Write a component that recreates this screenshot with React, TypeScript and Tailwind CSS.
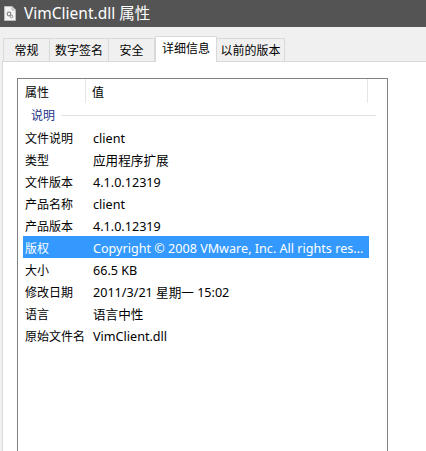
import * as React from "react";

const rows: [string, string][] = [
  ["文件说明", "client"],
  ["类型", "应用程序扩展"],
  ["文件版本", "4.1.0.12319"],
  ["产品名称", "client"],
  ["产品版本", "4.1.0.12319"],
  ["版权", "Copyright © 2008 VMware, Inc. All rights res..."],
  ["大小", "66.5 KB"],
  ["修改日期", "2011/3/21 星期一 15:02"],
  ["语言", "语言中性"],
  ["原始文件名", "VimClient.dll"],
];

const tabs = [
  { label: "常规", w: "w-[47px]" },
  { label: "数字签名", w: "w-[60px]" },
  { label: "安全", w: "w-[47px]" },
  { label: "详细信息", w: "w-[62px]", active: true },
  { label: "以前的版本", w: "w-[69px]" },
];

function FileIcon() {
  return (
    <svg width="12" height="15" viewBox="0 0 12 15">
      <path d="M0.5 0.5 H8 L11.5 4 V14.5 H0.5 Z" fill="#f4f4f4" stroke="#bdbdbd" />
      <path d="M8 0.5 V4 H11.5" fill="#dcdcdc" stroke="#bdbdbd" />
      <circle cx="5" cy="8" r="1.8" fill="none" stroke="#8a8a8a" strokeWidth="1.2" />
      <circle cx="7.5" cy="10.5" r="1.3" fill="none" stroke="#8a8a8a" strokeWidth="1" />
    </svg>
  );
}

export default function App() {
  return (
    <div className="w-[426px] h-[451px] bg-[#f0f0f0] overflow-hidden flex flex-col font-['Noto_Sans','Noto_Sans_CJK_SC',sans-serif] text-[12px] text-black">
      {/* title bar */}
      <div className="h-[27px] shrink-0 bg-[#545454] flex items-center pl-[4px]">
        <FileIcon />
        <span className="ml-[8px] text-white text-[15.5px] leading-none">VimClient.dll 属性</span>
      </div>

      {/* tabs */}
      <div className="h-[34px] shrink-0 flex items-end pl-[3px] relative z-10">
        {tabs.map((t) =>
          t.active ? (
            <div
              key={t.label}
              className={`${t.w} h-[26px] -mb-[1px] bg-white border border-b-0 border-[#d9d9d9] flex items-start pt-[3px] justify-center`}
            >
              {t.label}
            </div>
          ) : (
            <div
              key={t.label}
              className={`${t.w} h-[23px] pt-[2px] border border-b-0 border-[#d9d9d9] -ml-[1px] first:ml-0 flex items-center justify-center`}
            >
              {t.label}
            </div>
          )
        )}
      </div>

      {/* panel */}
      <div className="flex-1 ml-[2px] bg-white border-t border-l border-[#d9d9d9] pl-[14px] pt-[16px]">
        <div className="w-[371px] h-full border border-[#828282] border-b-0 pl-[5px]">
          {/* header */}
          <div className="h-[24px] flex items-center">
            <div className="w-[63px] pl-[2px] pt-[4px] h-full flex items-center border-r border-[#e5e5e5]">属性</div>
            <div className="w-[282px] pl-[6px] pt-[4px] h-full flex items-center border-r border-[#e5e5e5]">值</div>
          </div>
          {/* group */}
          <div className="h-[22px] pt-[3px] flex items-center pl-[8px] pr-[11px]">
            <span className="text-[#1e3287]">说明</span>
            <div className="flex-1 h-px bg-[#e0e0e0] ml-[6px]" />
          </div>
          {rows.map(([k, v], i) => {
            const sel = k === "版权";
            return (
              <div
                key={k}
                className={`h-[22px] w-[346px] pt-[4px] flex items-center ${i === 0 ? "mt-[1px]" : ""} ${sel ? "bg-[#3399ff] text-white" : ""}`}
              >
                <div className="w-[70px] pl-[2px] whitespace-nowrap">{k}</div>
                <div className="whitespace-nowrap text-[12.6px]">{v}</div>
              </div>
            );
          })}
        </div>
      </div>
    </div>
  );
}
